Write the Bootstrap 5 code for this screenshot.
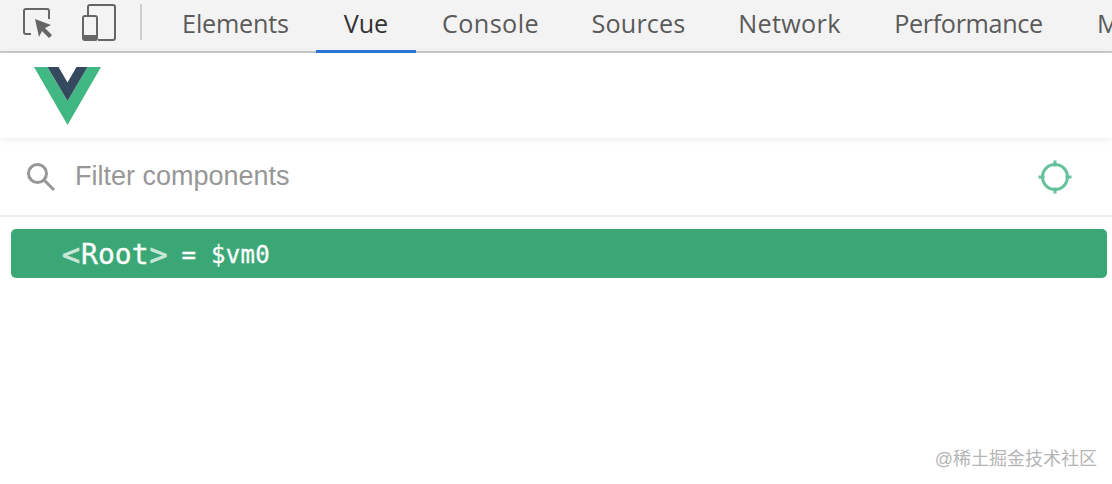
<!DOCTYPE html>
<html lang="en">
<head>
<meta charset="utf-8">
<title>Vue devtools</title>
<link href="https://cdn.jsdelivr.net/npm/bootstrap@5.3.0/dist/css/bootstrap.min.css" rel="stylesheet">
<style>
html,body{height:484px;overflow:hidden;background:#fff}
.dt-page{position:relative;height:484px;width:1112px;overflow:hidden}
.dt-bar{height:53px;background:#f3f3f3;border-bottom:2px solid #cbcbcb;font-family:"Open Sans","Noto Sans",sans-serif;font-size:25.2px;color:#5a5a5a;white-space:nowrap}
.dt-tools{width:155px;flex:none;position:relative}
.dt-tools svg{position:absolute}
.dt-ico1{left:22px;top:8px}
.dt-ico2{left:81px;top:4px}
.dt-sep{position:absolute;left:140px;top:4px;width:2px;height:36px;background:#cfcfcf}
.dt-tab{height:53px;line-height:47px;flex:none;text-align:center;letter-spacing:-.1px}
.dt-w1{width:161px;letter-spacing:-.2px}
.dt-w2{width:100px}
.dt-w3{width:149px;letter-spacing:.4px}
.dt-w4{width:147px;letter-spacing:.15px}
.dt-w5{width:155px;letter-spacing:.3px}
.dt-w6{width:203px;letter-spacing:-.35px}
.dt-w7{text-align:left;padding-left:27px}
.dt-tab-on{color:#333;border-bottom:3px solid #2a78dc;margin-bottom:-2px}
.dt-logo{height:85px;padding:14px 0 0 34px;background:#fff;position:relative;z-index:1;box-shadow:0 1px 8px rgba(0,0,0,.09)}
.dt-search{height:79px;border-bottom:2px solid #ededed;padding:0 40px 0 26px;font-family:"Liberation Sans",sans-serif;font-size:27px;color:#979797}
.dt-root{margin:12px 5px 0 11px;height:49px;background:#3ba776;border-radius:5px;color:#fff;padding:3px 0 0 51px;font-family:"DejaVu Sans Mono",monospace;white-space:nowrap}
.dt-name{font-size:28px;margin:0 1px;-webkit-text-stroke:.3px #fff}
.dt-ang{color:#c8e6d6;font-size:30px;line-height:1;-webkit-text-stroke:.8px #c8e6d6}
.dt-vm{font-size:24px;margin-left:14px;letter-spacing:.3px;-webkit-text-stroke:.3px #fff}
.dt-mark{position:absolute;right:15px;top:446px;font-family:"Liberation Sans","Noto Sans CJK SC",sans-serif;font-size:18px;color:#b5b5b5}
</style>
</head>
<body>
<div class="dt-page">
  <div class="dt-bar d-flex">
    <div class="dt-tools">
      <svg class="dt-ico1" width="32" height="32" viewBox="0 0 32 32" fill="none">
        <path d="M9 26H4a2 2 0 0 1-2-2V3a2 2 0 0 1 2-2h21a2 2 0 0 1 2 2v8" stroke="#666" stroke-width="2"/>
        <path d="M13 11l16 6-6 3 7 7-3 3-7-7-3 6z" fill="#666"/>
      </svg>
      <svg class="dt-ico2" width="36" height="37" viewBox="0 0 36 37" fill="none">
        <path d="M7 11V3a2 2 0 0 1 2-2h23a2 2 0 0 1 2 2v31a2 2 0 0 1-2 2H17" stroke="#666" stroke-width="2"/>
        <rect x="2" y="12" width="14" height="24" rx="2" stroke="#666" stroke-width="2"/>
        <rect x="2" y="31" width="14" height="5" fill="#666"/>
      </svg>
      <div class="dt-sep"></div>
    </div>
    <div class="d-flex">
      <div class="dt-tab dt-w1">Elements</div>
      <div class="dt-tab dt-w2 dt-tab-on">Vue</div>
      <div class="dt-tab dt-w3">Console</div>
      <div class="dt-tab dt-w4">Sources</div>
      <div class="dt-tab dt-w5">Network</div>
      <div class="dt-tab dt-w6">Performance</div>
      <div class="dt-tab dt-w7">Memory</div>
    </div>
  </div>
  <div class="dt-logo">
    <svg class="d-block" width="67" height="58" viewBox="0 0 67 58">
      <path d="M0 0h13.500l20 34L53.500 0H67L33.500 58z" fill="#41b883"/>
      <path d="M13.500 0h11l9 15.500 9-15.500h11L33.500 34z" fill="#35495e"/>
    </svg>
  </div>
  <div class="dt-search d-flex align-items-center justify-content-between">
    <div class="d-flex align-items-center">
      <svg width="30" height="30" viewBox="0 0 30 30" fill="none" stroke="#979797" stroke-width="3">
        <circle cx="11.500" cy="11.500" r="9"/>
        <path d="M18 18l10 10"/>
      </svg>
      <span style="margin-left:19px">Filter components</span>
    </div>
    <svg width="34" height="34" viewBox="0 0 34 34" fill="none" stroke="#66c29a" stroke-width="3">
      <circle cx="17" cy="17" r="12.500"/>
      <path d="M17 .5v6M17 27.500v6M.5 17h6M27.500 17h6"/>
    </svg>
  </div>
  <div class="dt-root d-flex align-items-center">
    <span class="dt-ang">&lt;</span><span class="dt-name">Root</span><span class="dt-ang">&gt;</span><span class="dt-vm">= $vm0</span>
  </div>
  <div class="dt-mark">@稀土掘金技术社区</div>
</div>
<script src="https://cdn.jsdelivr.net/npm/bootstrap@5.3.0/dist/js/bootstrap.bundle.min.js"></script>
</body>
</html>
